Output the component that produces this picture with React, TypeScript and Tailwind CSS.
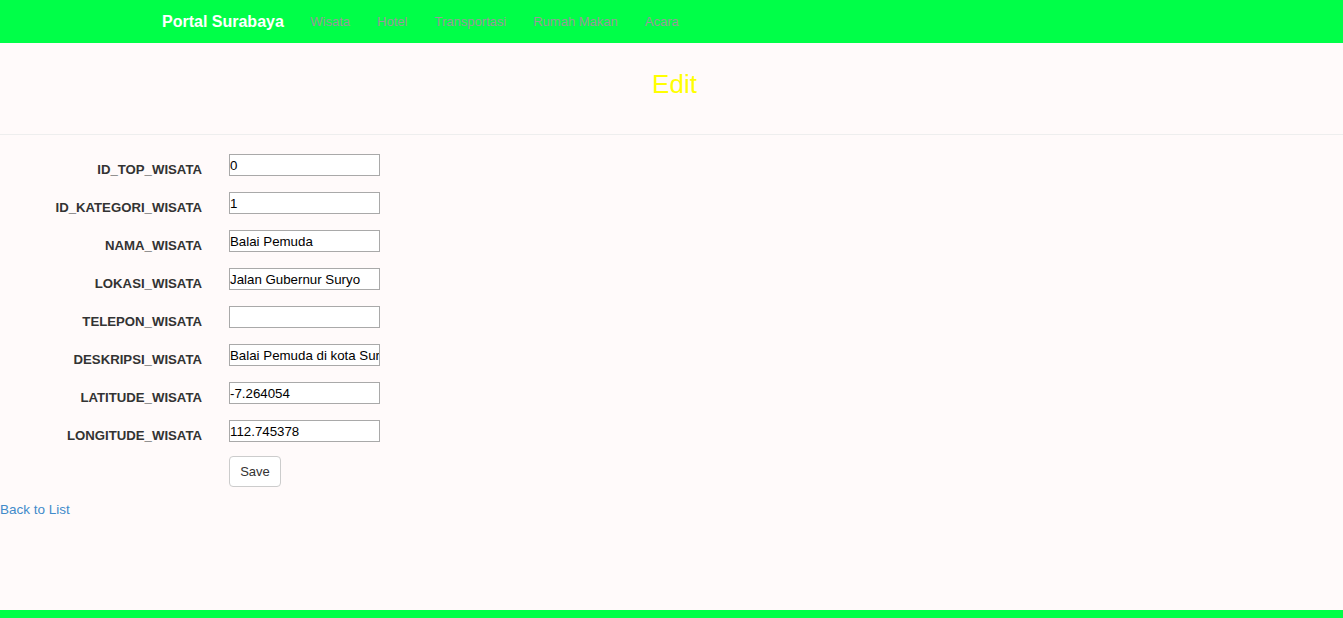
import React from 'react';

const fields: { label: string; value: string }[] = [
  { label: 'ID_TOP_WISATA', value: '0' },
  { label: 'ID_KATEGORI_WISATA', value: '1' },
  { label: 'NAMA_WISATA', value: 'Balai Pemuda' },
  { label: 'LOKASI_WISATA', value: 'Jalan Gubernur Suryo' },
  { label: 'TELEPON_WISATA', value: '' },
  { label: 'DESKRIPSI_WISATA', value: 'Balai Pemuda di kota Surabaya' },
  { label: 'LATITUDE_WISATA', value: '-7.264054' },
  { label: 'LONGITUDE_WISATA', value: '112.745378' },
];

const links = ['Wisata', 'Hotel', 'Transportasi', 'Rumah Makan', 'Acara'];

export default function App() {
  return (
    <div className="min-h-[618px] bg-[#fffafa] font-['Liberation_Sans',Arial,sans-serif] text-[14px] text-[#333] flex flex-col">
      <nav className="h-[43px] bg-[#00ff48] flex items-center pl-[162px]">
        <span className="text-white font-bold text-[16px] mr-[13px]">Portal Surabaya</span>
        {links.map((l) => (
          <a key={l} href="#" className="px-[13.5px] text-[13px] text-[#999]">
            {l}
          </a>
        ))}
      </nav>

      <div className="h-[92px] border-b border-[#eee] flex justify-center pt-[25px]">
        <h2 className="text-[26px] text-[#ffff00] leading-[32px] translate-x-[3px]">Edit</h2>
      </div>

      <form className="pt-[19px] flex flex-col">
        {fields.map((f) => (
          <div key={f.label} className="flex h-[38px]">
            <label className="w-[202px] text-right font-bold text-[13.2px] pt-[6px] leading-[20px]">{f.label}</label>
            <input
              readOnly
              value={f.value}
              className="ml-[27px] w-[151px] h-[22px] border border-[#a9a9a9] bg-white px-0 text-[13.3px] text-black outline-none font-['Liberation_Sans',Arial,sans-serif]"
            />
          </div>
        ))}
        <div className="flex pl-[229px] -mt-[2px]">
          <button
            type="button"
            className="w-[52px] h-[31px] border border-[#ccc] rounded-[4px] bg-white text-[13px] text-[#333]"
          >
            Save
          </button>
        </div>
      </form>

      <div className="mt-[12px]">
        <a href="#" className="text-[#428bca] text-[13.5px] leading-[20px]">Back to List</a>
      </div>

      <div className="flex-1" />
      <div className="h-[8px] bg-[#00ff48]" />
    </div>
  );
}
